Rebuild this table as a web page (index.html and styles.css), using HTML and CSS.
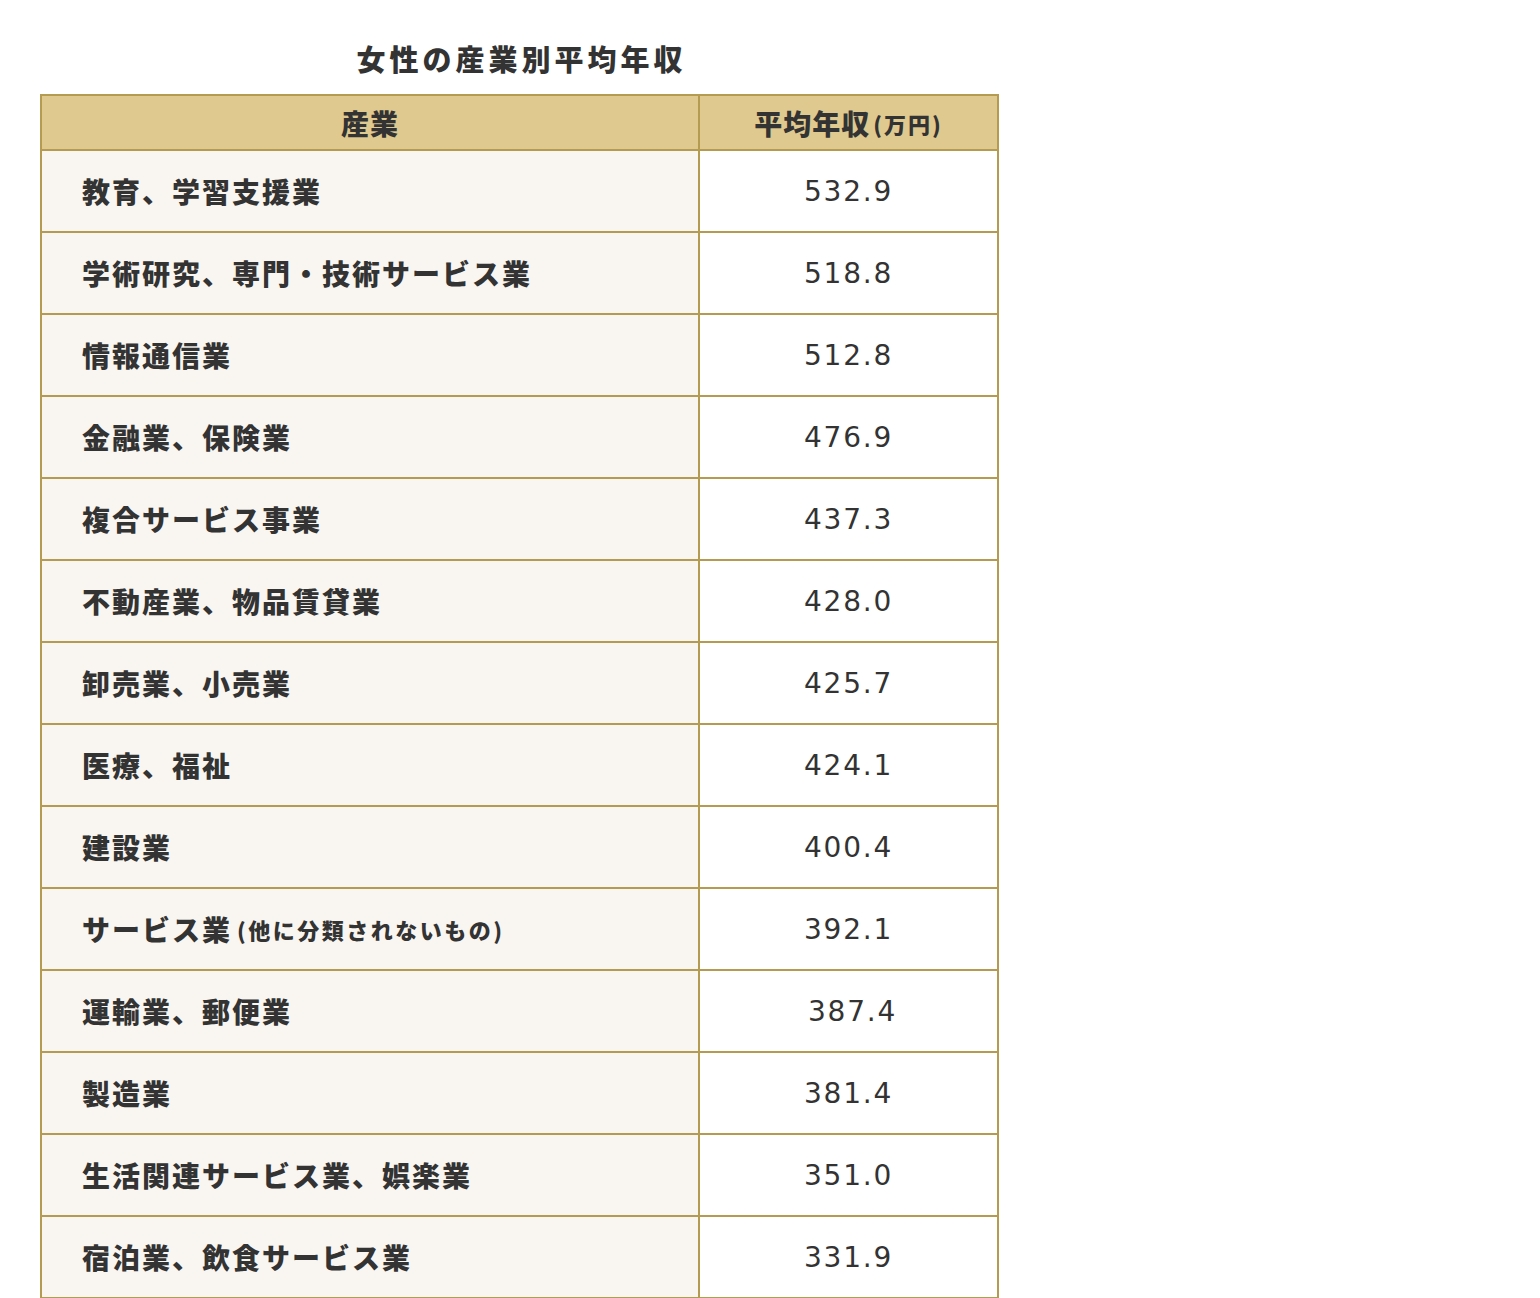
FILE: index.html
```html
<!DOCTYPE html>
<html lang="ja">
<head>
<meta charset="utf-8">
<title>女性の産業別平均年収</title>
<link rel="stylesheet" href="styles.css">
</head>
<body>
<div class="wrap">
  <h1 class="title">女性の産業別平均年収</h1>
  <div class="table">
    <div class="th">産業</div>
    <div class="th">平均年収<span class="unit">(万円)</span></div>

    <div class="name">教育、学習支援業</div><div class="num">532.9</div>
    <div class="name">学術研究、専門・技術サービス業</div><div class="num">518.8</div>
    <div class="name">情報通信業</div><div class="num">512.8</div>
    <div class="name">金融業、保険業</div><div class="num">476.9</div>
    <div class="name">複合サービス事業</div><div class="num">437.3</div>
    <div class="name">不動産業、物品賃貸業</div><div class="num">428.0</div>
    <div class="name">卸売業、小売業</div><div class="num">425.7</div>
    <div class="name">医療、福祉</div><div class="num">424.1</div>
    <div class="name">建設業</div><div class="num">400.4</div>
    <div class="name">サービス業<span class="note">(他に分類されないもの)</span></div><div class="num">392.1</div>
    <div class="name">運輸業、郵便業</div><div class="num shift">387.4</div>
    <div class="name">製造業</div><div class="num">381.4</div>
    <div class="name">生活関連サービス業、娯楽業</div><div class="num">351.0</div>
    <div class="name">宿泊業、飲食サービス業</div><div class="num">331.9</div>
  </div>
</div>
</body>
</html>
```

FILE: styles.css
```css
html, body {
  margin: 0;
  padding: 0;
  background: #ffffff;
}

body {
  font-family: "Noto Sans CJK JP", "Noto Sans", sans-serif;
  color: #333333;
}

.wrap {
  padding-left: 40px;
  width: 959px;
}

.title {
  margin: 38px 0 16px;
  height: 40px;
  line-height: 40px;
  font-size: 29px;
  font-weight: 900;
  letter-spacing: 4px;
  text-indent: 4px;
  text-align: center;
  color: #333333;
}

.table {
  display: grid;
  grid-template-columns: 658px 299px;
  grid-template-rows: 55px;
  grid-auto-rows: 82px;
  border-left: 2px solid #b59a52;
  border-top: 2px solid #b59a52;
}

.table > div {
  box-sizing: border-box;
  border-right: 2px solid #b59a52;
  border-bottom: 2px solid #b59a52;
  display: flex;
  align-items: center;
}

.th {
  background: #dfc98f;
  justify-content: center;
  font-size: 28px;
  font-weight: 900;
  letter-spacing: 1px;
  color: #333333;
}

.unit {
  font-size: 22px;
  letter-spacing: 2px;
  margin-left: 3px;
}

.name {
  background: #f9f6f1;
  padding-left: 40px;
  font-size: 28px;
  font-weight: 900;
  letter-spacing: 2px;
}

.note {
  font-size: 22px;
  letter-spacing: 2.5px;
  margin-left: 5px;
}

.num {
  background: #ffffff;
  justify-content: center;
  font-family: "DejaVu Sans", Verdana, sans-serif;
  font-size: 28px;
  letter-spacing: 1.8px;
  color: #333333;
}

.shift {
  padding-left: 8px;
}
```
